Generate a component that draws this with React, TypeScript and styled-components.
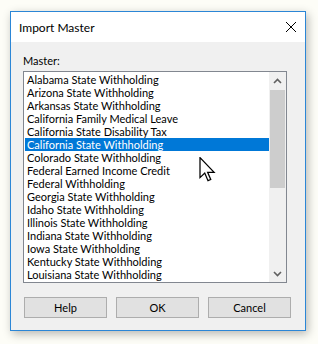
import { styled, createGlobalStyle } from "styled-components";

const MASTERS = [
  "Alabama State Withholding",
  "Arizona State Withholding",
  "Arkansas State Withholding",
  "California Family Medical Leave",
  "California State Disability Tax",
  "California State Withholding",
  "Colorado State Withholding",
  "Federal Earned Income Credit",
  "Federal Withholding",
  "Georgia State Withholding",
  "Idaho State Withholding",
  "Illinois State Withholding",
  "Indiana State Withholding",
  "Iowa State Withholding",
  "Kentucky State Withholding",
  "Louisiana State Withholding",
];

const SELECTED = 5;

const GlobalStyle = createGlobalStyle`
  html, body {
    margin: 0;
    padding: 0;
    background: #fdfdf7;
  }
  body {
    font-family: Lato, "Liberation Sans", Arial, sans-serif;
    font-size: 11px;
    color: #000;
  }
`;

const Page = styled.div`
  position: relative;
  width: 318px;
  height: 344px;
  padding: 11px 0 0 10px;
  box-sizing: border-box;
`;

const Dialog = styled.section`
  width: 296px;
  height: 320px;
  box-sizing: border-box;
  border: 1px solid #2b86d6;
  background: #f0f0f0;
  display: flex;
  flex-direction: column;
  box-shadow: 2px 3px 9px rgba(0, 0, 0, 0.28);
`;

const TitleBar = styled.header`
  height: 30px;
  flex: none;
  background: #fff;
  display: flex;
  align-items: center;
  justify-content: space-between;
  padding: 0 9px 0 8px;
`;

const Title = styled.h1`
  margin: 0;
  font-size: 12px;
  font-weight: 400;
`;

const CloseIcon = styled.svg`
  width: 10px;
  height: 10px;
  display: block;
`;

const Body = styled.div`
  flex: 1;
  display: flex;
  flex-direction: column;
  padding: 11px 0 0 12px;
`;

const Label = styled.label`
  height: 15px;
  line-height: 15px;
  margin-bottom: 3px;
`;

const ListBox = styled.div`
  width: 264px;
  height: 212px;
  box-sizing: border-box;
  border: 1px solid #828790;
  background: #fff;
  display: flex;
`;

const Items = styled.ul`
  flex: 1;
  list-style: none;
  margin: 0;
  padding: 1px 0 0 1px;
  overflow: hidden;
`;

const Item = styled.li<{ $selected?: boolean }>`
  height: 13px;
  line-height: 13px;
  padding-left: 2px;
  white-space: nowrap;
  background: ${({ $selected }) => ($selected ? "#0078d7" : "transparent")};
  color: ${({ $selected }) => ($selected ? "#fff" : "#000")};
`;

const ScrollBar = styled.div`
  width: 17px;
  flex: none;
  background: #f0f0f0;
  display: flex;
  flex-direction: column;
`;

const ArrowButton = styled.div`
  height: 17px;
  flex: none;
  display: flex;
  align-items: center;
  justify-content: center;
`;

const Track = styled.div`
  flex: 1;
  display: flex;
  flex-direction: column;
  padding: 1px 1px 0;
`;

const Thumb = styled.div`
  height: 98px;
  background: #cdcdcd;
`;

const Buttons = styled.div`
  display: flex;
  gap: 9px;
  margin-top: 14px;
  padding-left: 1px;
`;

const Button = styled.button`
  width: 83px;
  height: 21px;
  box-sizing: border-box;
  border: 1px solid #adadad;
  background: #e1e1e1;
  font-family: inherit;
  font-size: 11px;
  color: #000;
  padding: 0;
`;

const Cursor = styled.svg`
  position: absolute;
  left: 199px;
  top: 157px;
  width: 17px;
  height: 25px;
`;

const Chevron = ({ up }: { up?: boolean }) => (
  <svg width="9" height="6" viewBox="0 0 9 6">
    <path
      d={up ? "M1 5 L4.5 1.5 L8 5" : "M1 1 L4.5 4.5 L8 1"}
      fill="none"
      stroke="#606060"
      strokeWidth="1.6"
    />
  </svg>
);

const App = () => {
  return (
    <Page>
      <GlobalStyle />
      <Dialog>
        <TitleBar>
          <Title>Import Master</Title>
          <CloseIcon viewBox="0 0 10 10">
            <path d="M0 0 L10 10 M10 0 L0 10" stroke="#000" strokeWidth="1" />
          </CloseIcon>
        </TitleBar>
        <Body>
          <Label>Master:</Label>
          <ListBox>
            <Items>
              {MASTERS.map((name, i) => (
                <Item key={name} $selected={i === SELECTED}>
                  {name}
                </Item>
              ))}
            </Items>
            <ScrollBar>
              <ArrowButton>
                <Chevron up />
              </ArrowButton>
              <Track>
                <Thumb />
              </Track>
              <ArrowButton>
                <Chevron />
              </ArrowButton>
            </ScrollBar>
          </ListBox>
          <Buttons>
            <Button>Help</Button>
            <Button>OK</Button>
            <Button>Cancel</Button>
          </Buttons>
        </Body>
      </Dialog>
      <Cursor viewBox="0 0 13 20">
        <path
          d="M0.5 0.5 L0.5 16.5 L4.3 12.9 L6.9 18.9 L9.1 18 L6.6 12.2 L11.8 12.2 Z"
          fill="#fff"
          stroke="#000"
          strokeWidth="1"
          strokeLinejoin="miter"
        />
      </Cursor>
    </Page>
  );
};

export default App;
